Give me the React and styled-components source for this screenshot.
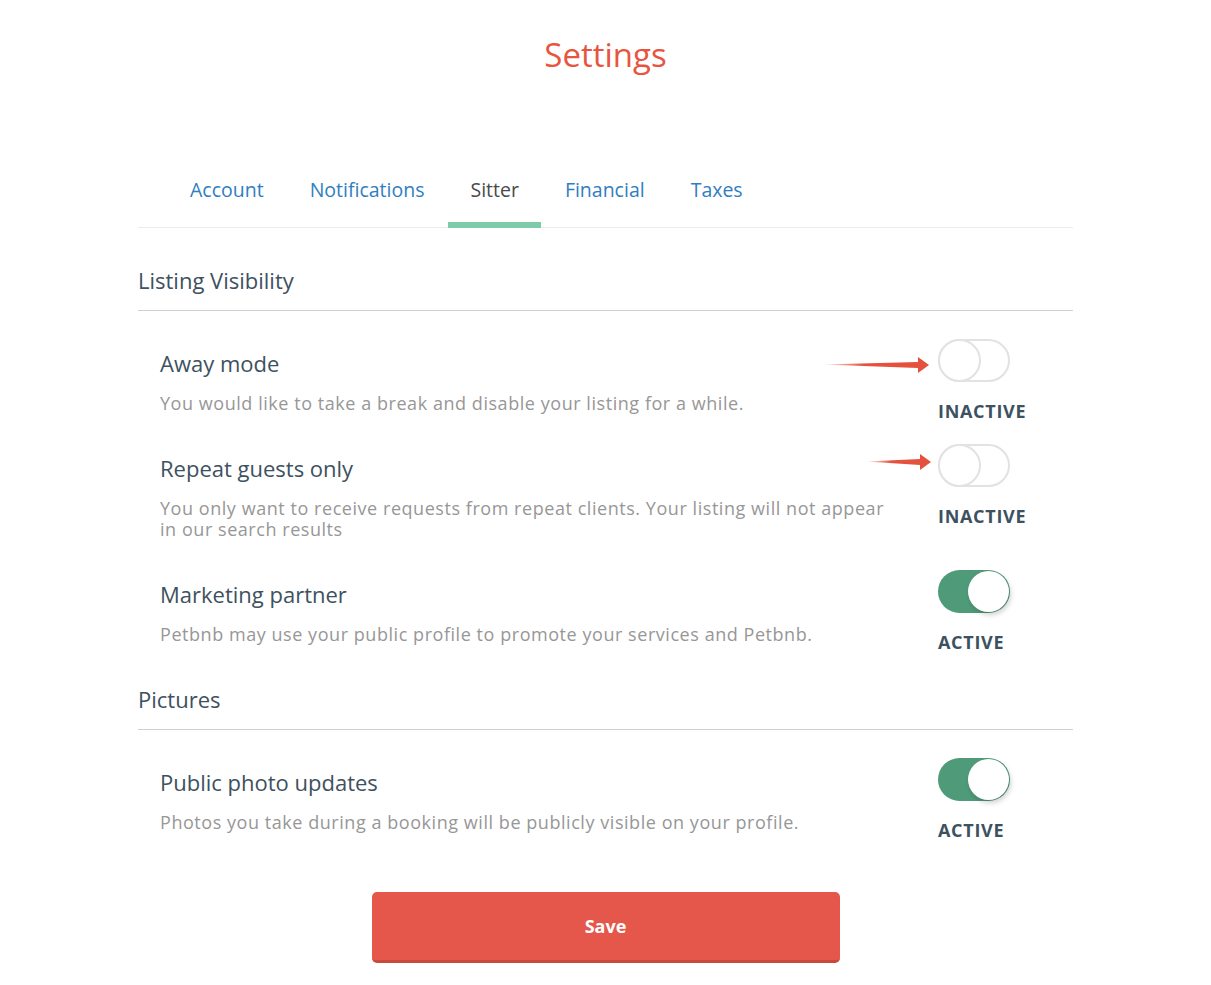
import styled, { createGlobalStyle } from "styled-components";

const GlobalStyle = createGlobalStyle`
  body {
    margin: 0;
    background: #fff;
    font-family: "Open Sans", "Liberation Sans", sans-serif;
  }
`;

const Page = styled.div`
  width: 935px;
  margin: 0 auto;
  padding-bottom: 22px;
`;

const Title = styled.h1`
  margin: 35px 0 0;
  text-align: center;
  font-size: 33px;
  line-height: 40px;
  font-weight: 400;
  color: #e8553f;
`;

const TabBar = styled.nav`
  display: flex;
  gap: 2px;
  margin-top: 103px;
  padding-left: 30px;
  border-bottom: 1px solid #ebebeb;
`;

const Tab = styled.a`
  position: relative;
  padding: 0 22px 25px;
  font-size: 19.5px;
  line-height: 24px;
  color: ${(p) => (p.$active ? "#4a4a4a" : "#2f7ebf")};
  cursor: pointer;

  &::after {
    content: "";
    display: ${(p) => (p.$active ? "block" : "none")};
    position: absolute;
    left: 0;
    right: 0;
    bottom: -1px;
    height: 6px;
    background: #7fcaa9;
  }
`;

const SectionHeading = styled.h2`
  margin: ${(p) => (p.$first ? "28px" : "0")} 0 0;
  padding: 10px 0 16px;
  font-size: 22px;
  line-height: 28px;
  font-weight: 400;
  color: #3e5160;
  border-bottom: 1px solid #d0d0d0;
`;

const List = styled.div`
  padding-top: 28px;
`;

const Row = styled.div`
  position: relative;
  display: flex;
  align-items: flex-start;
`;

const Info = styled.div`
  flex: 1;
  padding: 10px 40px 30px 22px;
`;

const ItemTitle = styled.div`
  font-size: 22px;
  line-height: 28px;
  color: #3e5160;
  margin-bottom: 16px;
`;

const ItemDesc = styled.div`
  font-size: 18px;
  line-height: 21px;
  letter-spacing: 0.55px;
  color: #979797;
`;

const Control = styled.div`
  width: 135px;
  padding-bottom: 22px;
`;

const Switch = styled.div`
  position: relative;
  width: 72px;
  height: 43px;
  box-sizing: border-box;
  border-radius: 22px;
  border: ${(p) => (p.$on ? "none" : "2px solid #e2e2e2")};
  background: ${(p) => (p.$on ? "#4f9a78" : "#fff")};

  &::after {
    content: "";
    position: absolute;
    top: ${(p) => (p.$on ? "1px" : "-2px")};
    left: ${(p) => (p.$on ? "30px" : "-2px")};
    width: ${(p) => (p.$on ? "41px" : "43px")};
    height: ${(p) => (p.$on ? "41px" : "43px")};
    box-sizing: border-box;
    border-radius: 50%;
    background: #fff;
    border: ${(p) => (p.$on ? "none" : "2px solid #e2e2e2")};
    box-shadow: ${(p) => (p.$on ? "2px 3px 5px rgba(0,0,0,0.18)" : "none")};
  }
`;

const Status = styled.div`
  margin-top: 18px;
  font-size: 18px;
  line-height: 22px;
  font-weight: 700;
  letter-spacing: 0.7px;
  color: #3d5260;
`;

const Arrow = styled.svg`
  position: absolute;
  left: ${(p) => p.$left}px;
  top: ${(p) => p.$top}px;
`;

const SaveButton = styled.button`
  display: block;
  width: 468px;
  height: 71px;
  margin: 29px auto 0;
  border: none;
  border-bottom: 3px solid #c9493c;
  border-radius: 5px;
  background: #e4574a;
  color: #fff;
  font-family: inherit;
  font-size: 18px;
  font-weight: 700;
  cursor: pointer;
`;

const RedArrow = ({ left, top, width }) => (
  <Arrow $left={left} $top={top} width={width} height="18" viewBox={`0 0 ${width} 18`}>
    <defs>
      <linearGradient id={`g${left}`} x1="0" x2="1" y1="0" y2="0">
        <stop offset="0" stopColor="#e4513c" stopOpacity="0.1" />
        <stop offset="0.4" stopColor="#e4513c" stopOpacity="1" />
      </linearGradient>
    </defs>
    <polygon
      points={`0,8.5 ${width - 11},6 ${width - 11},1 ${width},9 ${width - 11},17 ${width - 11},12`}
      fill={`url(#g${left})`}
    />
  </Arrow>
);

const tabs = ["Account", "Notifications", "Sitter", "Financial", "Taxes"];

const visibility = [
  {
    title: "Away mode",
    desc: "You would like to take a break and disable your listing for a while.",
    on: false,
    arrow: { left: 684, top: 17, width: 107 },
  },
  {
    title: "Repeat guests only",
    desc: "You only want to receive requests from repeat clients. Your listing will not appear in our search results",
    on: false,
    arrow: { left: 728, top: 9, width: 65 },
  },
  {
    title: "Marketing partner",
    desc: "Petbnb may use your public profile to promote your services and Petbnb.",
    on: true,
  },
];

const pictures = [
  {
    title: "Public photo updates",
    desc: "Photos you take during a booking will be publicly visible on your profile.",
    on: true,
  },
];

const SettingRow = ({ item }) => (
  <Row>
    <Info>
      <ItemTitle>{item.title}</ItemTitle>
      <ItemDesc>{item.desc}</ItemDesc>
    </Info>
    <Control>
      <Switch $on={item.on} />
      <Status>{item.on ? "ACTIVE" : "INACTIVE"}</Status>
    </Control>
    {item.arrow && <RedArrow {...item.arrow} />}
  </Row>
);

export default function App() {
  return (
    <>
      <GlobalStyle />
      <Page>
        <Title>Settings</Title>
        <TabBar>
          {tabs.map((t) => (
            <Tab key={t} $active={t === "Sitter"}>
              {t}
            </Tab>
          ))}
        </TabBar>

        <SectionHeading $first>Listing Visibility</SectionHeading>
        <List>
          {visibility.map((item) => (
            <SettingRow key={item.title} item={item} />
          ))}
        </List>

        <SectionHeading>Pictures</SectionHeading>
        <List>
          {pictures.map((item) => (
            <SettingRow key={item.title} item={item} />
          ))}
        </List>

        <SaveButton>Save</SaveButton>
      </Page>
    </>
  );
}
